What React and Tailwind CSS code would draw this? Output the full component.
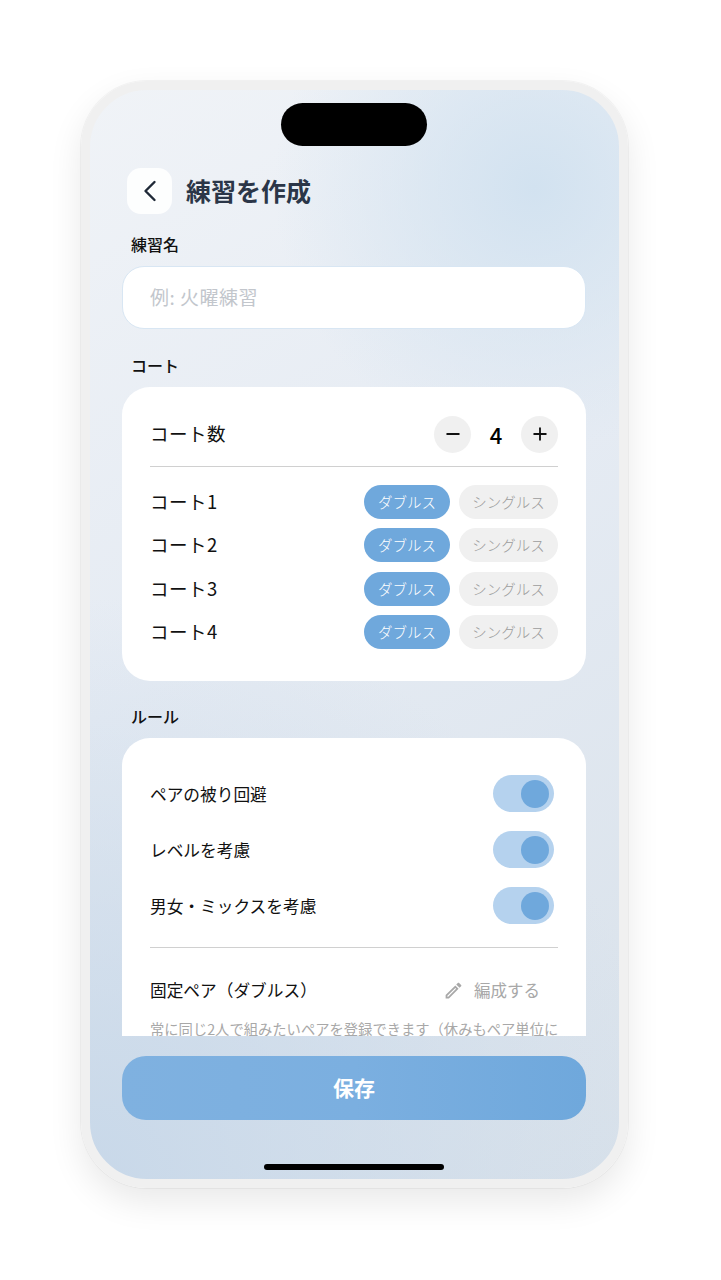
import { ChevronLeft, Minus, Plus } from 'lucide-react';
import { MdOutlineEdit } from 'react-icons/md';

const courts = ['コート1', 'コート2', 'コート3', 'コート4'];
const rules = ['ペアの被り回避', 'レベルを考慮', '男女・ミックスを考慮'];

function CourtRow({ name }) {
  return (
    <div className="flex items-center h-[34px] justify-between">
      <span className="text-[18.5px] tracking-[0.5px] text-[#111]">{name}</span>
      <div className="flex gap-[9px]">
        <span className="h-[34px] w-[86px] rounded-full bg-[#6fa8dc] text-white text-[14.5px] font-light flex items-center justify-center">ダブルス</span>
        <span className="h-[34px] w-[99px] rounded-full bg-[#f0f0f0] text-[#9c9c9c] text-[14.5px] font-light flex items-center justify-center">シングルス</span>
      </div>
    </div>
  );
}

function RuleRow({ name }) {
  return (
    <div className="flex items-center justify-between h-[37px] pr-[4px]">
      <span className="text-[16.7px] text-[#111] pt-[2px]">{name}</span>
      <div className="w-[61px] h-[37px] rounded-full bg-[#b5d2ee] flex items-center justify-end pr-[5px]">
        <div className="w-[28px] h-[28px] rounded-full bg-[#6fa8dc]" />
      </div>
    </div>
  );
}

export default function App() {
  return (
    <div className="w-[721px] h-[1280px] bg-white pt-[81px] pl-[81px] font-['Noto_Sans_CJK_JP',sans-serif]">
      <div className="relative w-[547px] h-[1107px] rounded-[66px] border-[9px] border-[#f0f0f0] shadow-[0_0_0_1px_rgba(0,0,0,0.04),0_14px_34px_rgba(0,0,0,0.09)] overflow-hidden flex flex-col bg-[radial-gradient(circle_at_84%_9%,#d2e2f0_0%,rgba(210,226,240,0)_24%),radial-gradient(circle_at_0%_100%,#c8d8e9_0%,rgba(200,216,233,0)_48%),linear-gradient(150deg,#f0f3f7_0%,#e5ebf3_45%,#d8e1ea_100%)]">
        <div className="absolute top-[13px] left-[191px] w-[146px] h-[43px] rounded-full bg-black" />

        <div className="h-[946px] shrink-0 overflow-hidden pl-[32px] pr-[33px] pt-[78px]">
          <div className="flex items-center pl-[5px] gap-[14px] h-[46px]">
            <div className="w-[45px] h-[46px] rounded-[14px] bg-white/90 flex items-center justify-center">
              <ChevronLeft size={36} strokeWidth={1.6} className="text-[#1f2937]" />
            </div>
            <h1 className="text-[25px] font-bold text-[#2b3648]">練習を作成</h1>
          </div>

          <div className="text-[16px] font-medium text-[#111] pl-[9px] mt-[18px] leading-[24px]">練習名</div>
          <div className="mt-[10px] h-[63px] rounded-[22px] bg-white border border-[#d8e6f3] flex items-center px-[27px] text-[19px] tracking-[0.5px] text-[#c2c6cc]">例: 火曜練習</div>

          <div className="text-[16px] font-medium text-[#111] pl-[9px] mt-[24px] leading-[24px]">コート</div>
          <div className="mt-[10px] h-[294px] rounded-[28px] bg-white px-[28px] pt-[28px]">
            <div className="flex items-center justify-between h-[38px]">
              <span className="text-[18.5px] tracking-[0.5px] text-[#111]">コート数</span>
              <div className="flex items-center">
                <div className="w-[37px] h-[37px] rounded-full bg-[#f0f0f0] flex items-center justify-center">
                  <Minus size={20} strokeWidth={2.2} className="text-[#111]" />
                </div>
                <span className="w-[50px] text-center text-[22px] font-medium text-black">4</span>
                <div className="w-[37px] h-[37px] rounded-full bg-[#f0f0f0] flex items-center justify-center">
                  <Plus size={20} strokeWidth={2.2} className="text-[#111]" />
                </div>
              </div>
            </div>
            <div className="h-px bg-[#d0d0d0] mt-[13px] mb-[18px]" />
            <div className="flex flex-col gap-[9.33px]">
              {courts.map(c => <CourtRow key={c} name={c} />)}
            </div>
          </div>

          <div className="text-[16px] font-medium text-[#111] pl-[9px] mt-[23px] leading-[24px]">ルール</div>
          <div className="mt-[10px] h-[400px] rounded-[28px] bg-white px-[28px] pt-[37px]">
            <div className="flex flex-col gap-[19px]">
              {rules.map(r => <RuleRow key={r} name={r} />)}
            </div>
            <div className="h-px bg-[#d0d0d0] mt-[23px]" />
            <div className="flex items-center justify-between h-[32px] mt-[26px] pr-[18px]">
              <span className="text-[16.7px] text-[#111] pt-[1px]">固定ペア（ダブルス）</span>
              <div className="flex items-center gap-[10px] text-[#a8a8a8]">
                <MdOutlineEdit size={21} />
                <span className="text-[16.5px]">編成する</span>
              </div>
            </div>
            <p className="mt-[12px] text-[14.3px] leading-[22px] text-[#a8a8a8] whitespace-nowrap">常に同じ2人で組みたいペアを登録できます（休みもペア単位に</p>
          </div>
        </div>

        <div className="pl-[32px] pr-[33px] mt-[20px]">
          <div className="h-[64px] rounded-[24px] bg-[linear-gradient(90deg,#7fb1e0,#7bafe0_50%,#6fa8dc)] flex items-center justify-center text-white text-[21px] font-semibold">保存</div>
        </div>

        <div className="absolute bottom-[9px] left-[174px] w-[180px] h-[6px] rounded-full bg-black" />
      </div>
    </div>
  );
}
